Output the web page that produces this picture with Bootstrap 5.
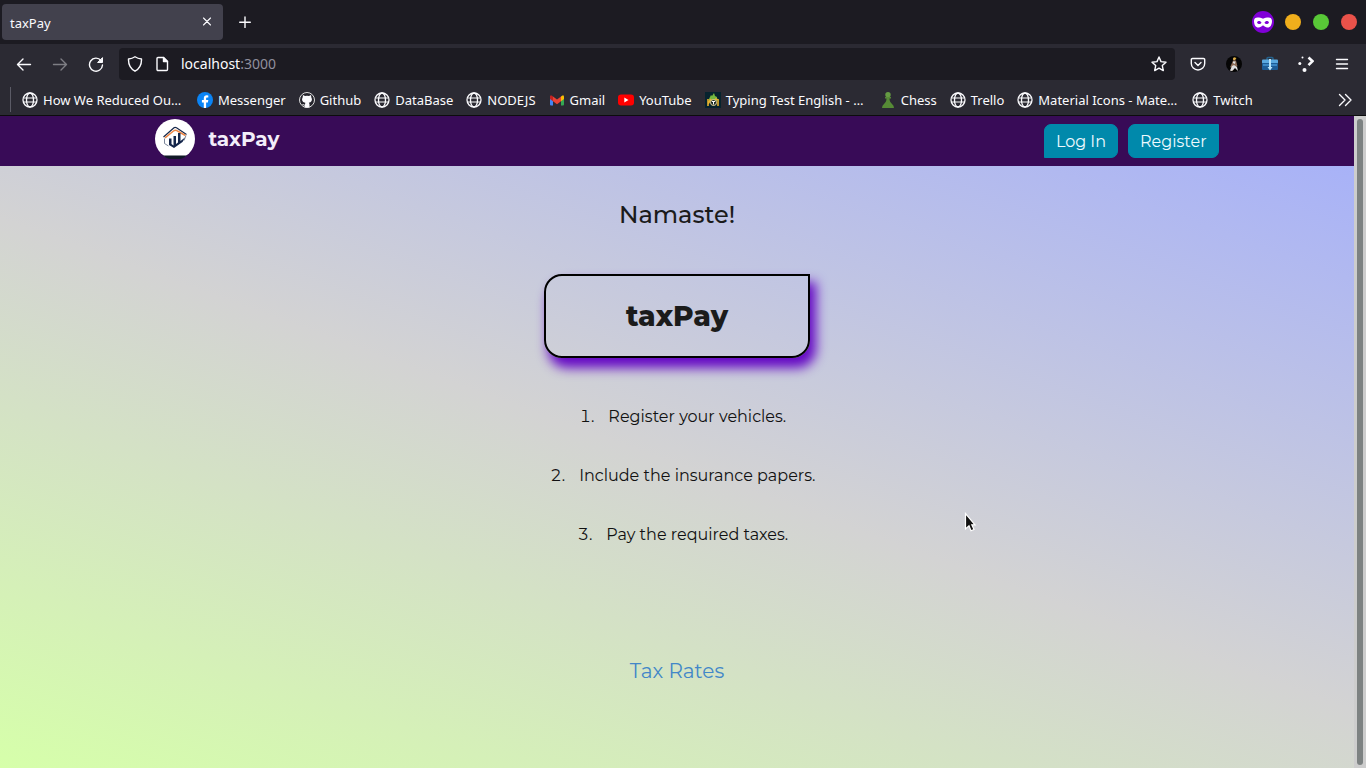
<!DOCTYPE html>
<html lang="en">
<head>
<meta charset="utf-8">
<meta name="viewport" content="width=device-width, initial-scale=1">
<title>taxPay</title>
<link rel="stylesheet" href="https://cdn.jsdelivr.net/npm/bootstrap@5.3.0/dist/css/bootstrap.min.css">
<style>
  body { font-family: "Noto Sans", sans-serif; font-size: 13px; line-height: 20px; color: #fbfbfe; background: #1c1b22; }
  button { color: inherit; }
  .browser-bar { background: #2b2a33; }
  .bare { border: 0; padding: 0; background: none; display: flex; align-items: center; justify-content: center; flex: none; }
  svg { display: block; flex: none; }
  .line-icon { fill: none; stroke: currentColor; stroke-width: 1.4; stroke-linecap: round; stroke-linejoin: round; }
  .thin-icon { stroke-width: 1.1; }
  .tab-strip { height: 44px; padding: 4px 9px 4px 2px; }
  .tab-item { width: 221px; height: 36px; background: #42414d; border-radius: 4px; padding: 2px 8px 0; }
  .win-dot { width: 16px; height: 16px; border-radius: 50%; }
  .dot-min { background: #f0ae1c; } .dot-max { background: #58c837; } .dot-close { background: #ea524a; }
  .private-mark { width: 22px; height: 22px; border-radius: 50%; background: #8000d7; margin-right: 11px; }
  .dot-list { gap: 12px; }
  .tool-row { height: 40px; padding: 4px 16px; }
  .tool-list { gap: 20px; }
  .address-box { height: 32px; gap: 11px; background: #1c1b22; border-radius: 4px; padding: 0 8px; margin: 0 15px; }
  .address-text { font-size: 14px; }
  .port-text { color: #8f8f9d; }
  .mark-row { height: 32px; border-bottom: 1px solid #0c0c0d; padding: 0 13px 0 10px; }
  .mark-split { width: 1px; height: 25px; background: #5b5b66; margin-right: 11px; }
  .mark-link { color: #fbfbfe; text-decoration: none; white-space: nowrap; gap: 5px; }
  .mark-long { width: 162px; }
  .mark-list { gap: 13px; min-width: 0; }
  .site { font-family: Montserrat, Inter, sans-serif; font-size: 16px; line-height: 24px; color: #1b1b1b;
    background: linear-gradient(20deg, #d6ffaa, lightgray 48%, #a4affb); }
  .site-nav { height: 50px; margin-bottom: 33px; background: #380b57; padding: 0 10%; }
  .site-brand { color: #f3eefa; font-size: 20px; font-weight: 700; gap: 13px; margin-left: 20px; margin-top: -5px; text-decoration: none; }
  .site-brand:hover { color: #fff; }
  .site-actions { gap: 10px; }
  .site-btn { --bs-btn-bg: #0089ab; --bs-btn-color: #eefaff; --bs-btn-border-color: #0089ab; --bs-btn-hover-bg: #007896; --bs-btn-hover-color: #fff;
    height: 34px; padding: 2px 11px 0; line-height: 24px; font-size: 16px; }
  .btn-login { border-radius: 7px 7px 7px 0; }
  .btn-register { border-radius: 7px 0 7px 7px; }
  .greeting { font-size: 24px; line-height: 32px; font-weight: 500; margin: 0 0 43px; }
  .title-card { width: 266px; height: 84px; padding-top: 2px; border: 2px solid #000; border-radius: 18px 0 18px 18px; box-shadow: 5px 9px 12px 1px #6508c4; }
  .title-text { font-size: 28px; font-weight: 800; margin: 0; }
  .steps { list-style: none; counter-reset: step; gap: 35px; margin: 47px 0 0; padding: 0 0 0 12px; color: #111; }
  .steps li { counter-increment: step; display: flex; gap: 14px; justify-content: center; }
  .steps li::before { content: counter(step) "."; font-variant-numeric: tabular-nums; }
  .rates-link { font-size: 20px; color: #4287c8; text-decoration: none; margin-top: 112px; }
  .scroll-track { width: 12px; background: #cdcdcd; padding: 3px; }
  .scroll-thumb { width: 6px; border-radius: 3px; background: #7d8282; }
  .pointer { position: absolute; left: 963px; top: 396px; }
</style>
</head>
<body class="vh-100 d-flex flex-column overflow-hidden">
<svg width="0" height="0" class="position-absolute" aria-hidden="true">
  <symbol id="globe" viewBox="0 0 16 16"><g fill="none" stroke="#fbfbfe" stroke-width="1.3"><circle cx="8" cy="8" r="7"/><ellipse cx="8" cy="8" rx="3.5" ry="7"/><path d="M1.5 6H14.5M1.5 10H14.5" stroke-width="1.1"/></g></symbol>
</svg>

<header class="flex-shrink-0">
  <div class="tab-strip d-flex align-items-center">
    <div class="tab-item d-flex align-items-center justify-content-between">
      <span>taxPay</span>
      <button class="bare" aria-label="Close tab"><svg class="line-icon thin-icon" width="16" height="16" viewBox="0 0 16 16"><path d="M4.500 3l7 7M11.500 3l-7 7"/></svg></button>
    </div>
    <button class="bare ms-3" aria-label="New tab"><svg class="line-icon" width="12" height="12" viewBox="0 0 12 12"><path d="M6 1v10.600M.7 6.300h10.600"/></svg></button>
    <div class="private-mark d-flex align-items-center justify-content-center ms-auto">
      <svg width="18" height="11" viewBox="0 0 18 11"><path fill="#fff" fill-rule="evenodd" d="M0 4C0 1 2 0 5 0.500C7 .8 8 1.500 9 1.500S11 .8 13 .5C16 0 18 1 18 4C18 8 16 11 13 10.500C11 10.200 10 8.500 9 8.500S7 10.200 5 10.500C2 11 0 8 0 4ZM3 5.500C4 7.500 6.500 7.500 7.500 5.800C6.500 3.500 4 3.500 3 5.500ZM15 5.500C14 3.500 11.500 3.500 10.500 5.800C11.500 7.500 14 7.500 15 5.500Z"/></svg>
    </div>
    <div class="dot-list d-flex">
      <button class="bare win-dot dot-min" aria-label="Minimize"></button>
      <button class="bare win-dot dot-max" aria-label="Maximize"></button>
      <button class="bare win-dot dot-close" aria-label="Close window"></button>
    </div>
  </div>

  <div class="browser-bar tool-row d-flex align-items-center">
    <div class="tool-list d-flex">
      <button class="bare" aria-label="Back"><svg class="line-icon" width="16" height="16" viewBox="0 0 16 16"><path d="M7 3L1.500 8.500 7 14M1.500 8.500H14.500"/></svg></button>
      <button class="bare" aria-label="Forward"><svg class="line-icon" width="16" height="16" viewBox="0 0 16 16" opacity=".4"><path d="M9 3l5.500 5.500L9 14M14.500 8.500H1.500"/></svg></button>
      <button class="bare" aria-label="Reload"><svg class="line-icon" width="16" height="16" viewBox="0 0 16 16"><path d="M13 4.500A6.500 6.500 0 1 0 14.500 9"/><path d="M14.500 2v4.500H10z" fill="currentColor" stroke-width="1"/></svg></button>
    </div>
    <div class="address-box d-flex align-items-center flex-grow-1">
      <svg class="line-icon" width="16" height="16" viewBox="0 0 16 16"><path d="M8 .8C6 2.200 4 2.800 1.500 3C1.300 8 3 12.500 8 15.200C13 12.500 14.700 8 14.500 3C12 2.800 10 2.200 8 .8Z"/></svg>
      <svg class="line-icon" width="16" height="16" viewBox="0 0 16 16"><path d="M4 1.500H9.500l4 4V13.500a1 1 0 0 1-1 1H4a1 1 0 0 1-1-1v-11a1 1 0 0 1 1-1Z"/><path d="M9.500 1.500v4h4z" fill="currentColor"/></svg>
      <span class="address-text flex-grow-1">localhost<span class="port-text">:3000</span></span>
      <button class="bare" aria-label="Bookmark this page"><svg class="line-icon" width="16" height="16" viewBox="0 0 16 16"><path d="M8 1l2 4.600 5 .6-3.700 3.400 1 5L8 12.200l-4.300 2.400 1-5L1 6.200l5-.6Z"/></svg></button>
    </div>
    <div class="tool-list d-flex">
      <button class="bare" aria-label="Save to Pocket"><svg class="line-icon" width="16" height="16" viewBox="0 0 16 16"><path d="M2.500 2.500h11a1.200 1.200 0 0 1 1.200 1.200V7.500a6.700 6.500 0 0 1-13.400 0V3.700a1.200 1.200 0 0 1 1.200-1.200ZM5 6.500l3 3 3-3"/></svg></button>
      <button class="bare" aria-label="Account"><svg width="16" height="16" viewBox="0 0 16 16"><circle cx="8" cy="8" r="8" fill="#050505"/><circle cx="8.300" cy="3" r="1.400" fill="#d9aa55"/><path d="M8 1.500l2.500.5-1 1z" fill="#f5c431"/><path d="M7 4.500h3l1.500 6-1-.5.5 3-2-2-2 3.500-2.500.5 1-4-1.500.5z" fill="#8b6b55"/><path d="M7 5.500h2.500L9 8 7 7zM6 10l2-1 3 2 1 4-3-3-3 3-2-.5z" fill="#ddd"/></svg></button>
      <button class="bare" aria-label="Downloads toolbox"><svg width="16" height="16" viewBox="0 0 16 16"><path d="M5 4V2.500q0-1 1-1h4q1 0 1 1V4" fill="none" stroke="#25628d" stroke-width="1.500"/><rect y="3.500" width="16" height="4" rx="1" fill="#5aa9e0"/><path d="M0 7h16v6q0 1-1 1H1q-1 0-1-1z" fill="#1d5c96"/><path d="M1 8h14v2H1z" fill="#3b87c4"/><path d="M7 3h2v8h1.500L8 14.500 5.500 11H7z" fill="#b8e4fb"/></svg></button>
      <button class="bare" aria-label="Extension"><svg width="16" height="16" viewBox="0 0 16 16" fill="#fbfbfe"><circle cx="4.500" cy="1.500" r="1"/><circle cx="1.800" cy="7.500" r="1.500"/><circle cx="6.500" cy="14" r="2"/><path d="M10.500 1.500l4 3.700-4 4" fill="none" stroke="#fbfbfe" stroke-width="2.600"/></svg></button>
      <button class="bare" aria-label="Menu"><svg class="line-icon" width="16" height="16" viewBox="0 0 16 16"><path d="M2.500 3.500h11M2.500 8h11M2.500 12.500h11"/></svg></button>
    </div>
  </div>

  <div class="browser-bar mark-row d-flex align-items-center">
    <div class="mark-split"></div>
    <nav class="mark-list d-flex flex-grow-1 overflow-hidden" aria-label="Bookmarks">
      <a href="#" class="mark-link mark-long d-flex align-items-center"><svg width="16" height="16"><use href="#globe"/></svg>How We Reduced Ou…</a>
      <a href="#" class="mark-link d-flex align-items-center"><svg width="16" height="16" viewBox="0 0 16 16"><circle cx="8" cy="8" r="8" fill="#0a84f5"/><path fill="#fff" d="M6.800 16v-5.600H4.900V8h1.900V6.500c0-2.100 1.200-3.200 3-3.200l1.500.1v2h-1c-.9 0-1.200.5-1.200 1.200V8h2.200l-.4 2.400H9.100V16z"/></svg>Messenger</a>
      <a href="#" class="mark-link d-flex align-items-center"><svg width="16" height="16" viewBox="0 0 16 16"><circle cx="8" cy="8" r="7.500" fill="#25242c" stroke="#ddd"/><path fill="#fbfbfe" d="M4 3l2 1q2-.5 4 0l2-1 .3 2.300C14 8.500 12 10.500 9.800 10.800q.7.600.7 1.700V15.500H5.700V13.500C4 13.800 3.800 12.500 3 12q1.300-.3 2 .6.7.2 1-.2l.3-1.600C4 10.500 2 8.500 3.700 5.300Z"/></svg>Github</a>
      <a href="#" class="mark-link d-flex align-items-center"><svg width="16" height="16"><use href="#globe"/></svg>DataBase</a>
      <a href="#" class="mark-link d-flex align-items-center"><svg width="16" height="16"><use href="#globe"/></svg>NODEJS</a>
      <a href="#" class="mark-link d-flex align-items-center"><svg width="16" height="16" viewBox="0 0 16 16"><path fill="#4285f4" d="M1 4l3 2v7.500H2q-1 0-1-1z"/><path fill="#34a853" d="M12 6l3-2v8.500q0 1-1 1h-2z"/><path fill="#fbbc04" d="M12 4.500l1-.8q2-1.200 2 1.300v2l-3 2.200z"/><path fill="#c5221f" d="M1 7V5q0-2.500 2-1.300l1 .8v4.700z"/><path fill="#ea4335" d="M4 9.200V4.500l4 3 4-3v4.700l-4 3z"/></svg>Gmail</a>
      <a href="#" class="mark-link d-flex align-items-center"><svg width="16" height="16" viewBox="0 0 16 16"><rect y="2.500" width="16" height="11" rx="3" fill="#f00"/><path fill="#fff" d="M6.300 5.500L10.500 8l-4.200 2.500z"/></svg>YouTube</a>
      <a href="#" class="mark-link mark-long d-flex align-items-center"><svg width="16" height="16" viewBox="0 0 16 16"><path fill="#06232e" d="M0 0h16v16H0z"/><path fill="#75b83f" d="M4 7l2-4 1 1 2-3 1 3 2 1v4H4z"/><path d="M3 7v7M3 12l3-5M13 7v7M10 7q4 0 3 3" fill="none" stroke="#e8b22e" stroke-width="1.600"/><circle cx="8.500" cy="10.500" r="3" fill="#1c2c27" stroke="#e9d79a"/><path d="M7 9.500h3M8.500 9.500v3" stroke="#fff"/></svg>Typing Test English - …</a>
      <a href="#" class="mark-link d-flex align-items-center"><svg width="16" height="16" viewBox="0 0 16 16"><circle cx="8" cy="2.800" r="2.700" fill="#659b43"/><path fill="#568a36" d="M5 5h6v1.500H9.500C9.500 9 10.500 10.500 12 12q2 1.500 2 4H2q0-2.500 2-4c1.500-1.500 2.500-3 2.500-5.500H5z"/></svg>Chess</a>
      <a href="#" class="mark-link d-flex align-items-center"><svg width="16" height="16"><use href="#globe"/></svg>Trello</a>
      <a href="#" class="mark-link mark-long d-flex align-items-center"><svg width="16" height="16"><use href="#globe"/></svg>Material Icons - Mate…</a>
      <a href="#" class="mark-link d-flex align-items-center"><svg width="16" height="16"><use href="#globe"/></svg>Twitch</a>
    </nav>
    <button class="bare" aria-label="More bookmarks"><svg class="line-icon" width="16" height="16" viewBox="0 0 16 16"><path d="M2.500 2.500L8 8l-5.500 5.500M8.500 2.500L14 8l-5.500 5.500"/></svg></button>
  </div>
</header>

<div class="d-flex flex-grow-1">
  <div class="site d-flex flex-column flex-grow-1 position-relative">
    <nav class="site-nav d-flex align-items-center justify-content-between">
      <a href="#" class="site-brand d-flex align-items-center">
        <svg width="40" height="40" viewBox="0 0 40 40">
          <circle cx="20" cy="20" r="20" fill="#fff"/><path d="M7.700 36.500A20 20 0 0 0 32.300 36.500Z" fill="#111827"/>
          <path d="M8.500 18L19 8.800Q20 8 21.500 8.800L31.500 15.500" fill="none" stroke="#17284a" stroke-width="1.200"/>
          <path d="M10 18.800L18.500 12Q20.500 10.500 22.500 12L30.500 16.500" fill="none" stroke="#ee8745" stroke-width="1.500"/>
          <path d="M9.500 19.500v5l4 2.500M31 16.500l-2 5" fill="none" stroke="#5b6780" stroke-width=".8"/>
          <path d="M14 19.500h2.500V25l2 1.500V17H21v8l2-1.500V14h2.500v8L30 18.500 27.500 23l-8.500 6-5-3z" fill="#14264b"/>
        </svg>
        <span>taxPay</span>
      </a>
      <div class="site-actions d-flex">
        <button class="btn site-btn btn-login">Log In</button>
        <button class="btn site-btn btn-register">Register</button>
      </div>
    </nav>
    <main class="d-flex flex-column align-items-center">
      <h2 class="greeting">Namaste!</h2>
      <div class="title-card d-flex align-items-center justify-content-center"><h1 class="title-text">taxPay</h1></div>
      <ol class="steps d-flex flex-column">
        <li>Register your vehicles.</li>
        <li>Include the insurance papers.</li>
        <li>Pay the required taxes.</li>
      </ol>
      <a href="#" class="rates-link">Tax Rates</a>
    </main>
    <svg class="pointer" width="14" height="22" viewBox="0 0 14 22"><path d="M2.500 1.500V17l3.500-3.200 2 5 3-1.300-2.200-4.700H12Z" fill="#111" stroke="#fff" stroke-width="1.200"/></svg>
  </div>
  <div class="scroll-track d-flex"><div class="scroll-thumb"></div></div>
</div>
<script src="https://cdn.jsdelivr.net/npm/bootstrap@5.3.0/dist/js/bootstrap.bundle.min.js"></script>
</body>
</html>
